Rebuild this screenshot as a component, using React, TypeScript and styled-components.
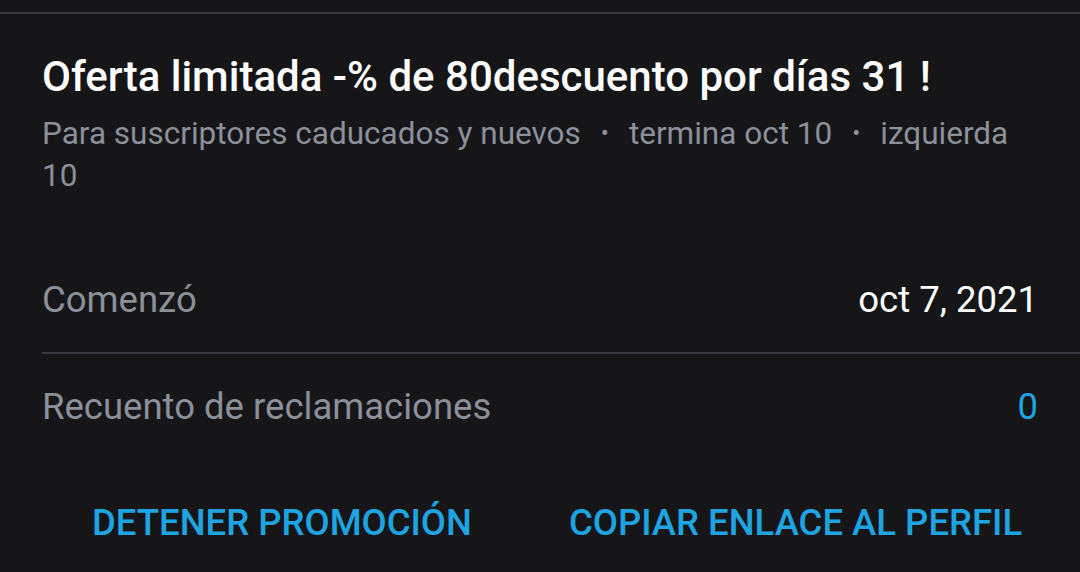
import React from "react";
import styled, { createGlobalStyle } from "styled-components";

const GlobalStyle = createGlobalStyle`
  html, body {
    margin: 0;
    padding: 0;
    background: #161619;
  }
  body {
    font-family: Roboto, "Noto Sans", "Liberation Sans", sans-serif;
    -webkit-font-smoothing: antialiased;
  }
`;

const Page = styled.div`
  width: 1080px;
  height: 572px;
  overflow: hidden;
  background: #161619;
  padding-top: 12px;
  box-sizing: border-box;
`;

const TopRule = styled.div`
  height: 2px;
  background: #3a3b40;
`;

const Header = styled.div`
  padding: 38px 42px 0 42px;
`;

const Title = styled.h1`
  margin: 0;
  font-size: 42px;
  line-height: 50px;
  font-weight: 500;
  color: #ffffff;
`;

const Meta = styled.p`
  margin: 11px 0 0 0;
  font-size: 31.5px;
  line-height: 42px;
  font-weight: 400;
  color: #8b9099;
`;

const MetaWord = styled.span``;

const Dot = styled.span`
  padding: 0 20px;
  font-size: 24px;
  line-height: 24px;
  vertical-align: 3px;
`;

const Details = styled.div`
  margin: 50px 0 0 42px;
`;

const Row = styled.div<{ $divider?: boolean }>`
  display: flex;
  justify-content: space-between;
  align-items: center;
  padding: 31.5px 42px 31.5px 0;
  border-bottom: ${(p) => (p.$divider ? "2px solid #3a3b40" : "none")};
`;

const Label = styled.span`
  font-size: 36.5px;
  line-height: 42px;
  color: #8b9099;
`;

const Value = styled.span<{ $accent?: boolean }>`
  font-size: 36.5px;
  line-height: 42px;
  color: ${(p) => (p.$accent ? "#1ea4e0" : "#ffffff")};
`;

const Actions = styled.div`
  display: flex;
  gap: 97px;
  margin: 42.5px 0 0 92px;
`;

const ActionButton = styled.button`
  background: none;
  border: none;
  padding: 0;
  font-family: inherit;
  font-size: 36.5px;
  line-height: 42px;
  font-weight: 500;
  color: #1ea4e0;
  text-transform: uppercase;
  cursor: pointer;
`;

const metaParts = [
  ["Para suscriptores caducados y nuevos"],
  ["termina oct 10"],
  ["izquierda", "10"],
];

export default function App() {
  return (
    <>
      <GlobalStyle />
      <Page>
        <TopRule />
        <Header>
          <Title>Oferta limitada -% de 80descuento por días 31 !</Title>
          <Meta>
            {metaParts.map((words, i) => (
              <React.Fragment key={i}>
                {i > 0 && <Dot>•</Dot>}
                {words.map((w, j) => (
                  <React.Fragment key={w}>
                    {j > 0 && " "}
                    <MetaWord>{w}</MetaWord>
                  </React.Fragment>
                ))}
              </React.Fragment>
            ))}
          </Meta>
        </Header>
        <Details>
          <Row $divider>
            <Label>Comenzó</Label>
            <Value>oct 7, 2021</Value>
          </Row>
          <Row>
            <Label>Recuento de reclamaciones</Label>
            <Value $accent>0</Value>
          </Row>
        </Details>
        <Actions>
          <ActionButton>Detener promoción</ActionButton>
          <ActionButton>Copiar enlace al perfil</ActionButton>
        </Actions>
      </Page>
    </>
  );
}
